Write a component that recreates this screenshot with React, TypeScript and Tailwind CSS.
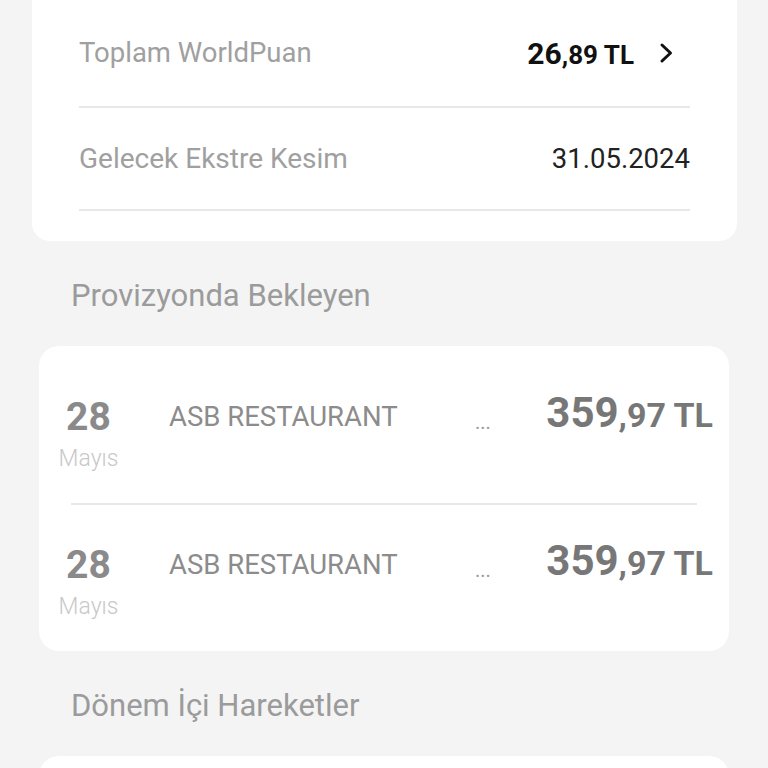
import React from "react";

function Chevron() {
  return (
    <svg width="18" height="22" viewBox="0 0 18 22" fill="none">
      <path d="M4 3 L12.5 11 L4 19" stroke="#111" strokeWidth="3" strokeLinecap="round" strokeLinejoin="round" />
    </svg>
  );
}

function TxRow() {
  return (
    <div className="flex pt-[38px] pb-[30px]">
      <div className="ml-[19px] flex w-[61px] flex-col items-center">
        <span className="text-[39px] font-bold leading-[44px] text-[#8a8a8a]">28</span>
        <span className="mt-[6px] text-[23px] font-light leading-[28px] text-[#c8c8c8]">Mayıs</span>
      </div>
      <div className="flex h-[44px] flex-1 items-center pr-[16px]">
        <span className="ml-[50px] w-[300px] text-[27.5px] leading-[44px] text-[#8c8c8c]">ASB RESTAURANT</span>
        <span className="ml-[6px] mt-[10px] text-[20px] text-[#9a9a9a]">...</span>
        <span className="ml-auto whitespace-nowrap font-bold leading-[44px] text-[#777777]">
          <span className="text-[42px]">359</span>
          <span className="text-[34px]">,97 TL</span>
        </span>
      </div>
    </div>
  );
}

export default function App() {
  return (
    <div className="min-h-[768px] w-[768px] overflow-hidden bg-[#f4f4f4] font-['Roboto',sans-serif]">
      <div className="ml-[32px] w-[705px] rounded-b-[18px] bg-white px-[47px] pb-[30px]">
        <div className="flex h-[106px] items-center justify-between">
          <span className="text-[27.5px] text-[#a0a0a0]">Toplam WorldPuan</span>
          <div className="flex items-center">
            <span className="font-bold text-[#111]">
              <span className="text-[30px]">26</span>
              <span className="text-[26px]">,89 TL</span>
            </span>
            <span className="ml-[24px] mr-[14px] flex items-center">
              <Chevron />
            </span>
          </div>
        </div>
        <div className="h-[2px] bg-[#e8e8e8]" />
        <div className="flex h-[101px] items-center justify-between">
          <span className="text-[28px] text-[#a0a0a0]">Gelecek Ekstre Kesim</span>
          <span className="text-[27.5px] text-[#222]">31.05.2024</span>
        </div>
        <div className="h-[2px] bg-[#e8e8e8]" />
      </div>

      <div className="ml-[71px] mt-[35px] mb-[30px] text-[31px] leading-[40px] text-[#9b9b9b]">Provizyonda Bekleyen</div>

      <div className="ml-[39px] w-[690px] rounded-[20px] bg-white pt-[11px]">
        <TxRow />
        <div className="mx-[32px] h-[2px] bg-[#e8e8e8]" />
        <TxRow />
      </div>

      <div className="ml-[71px] mt-[35px] mb-[30px] text-[31px] leading-[40px] text-[#9b9b9b]">Dönem İçi Hareketler</div>

      <div className="ml-[39px] h-[120px] w-[690px] rounded-[20px] bg-white" />
    </div>
  );
}
